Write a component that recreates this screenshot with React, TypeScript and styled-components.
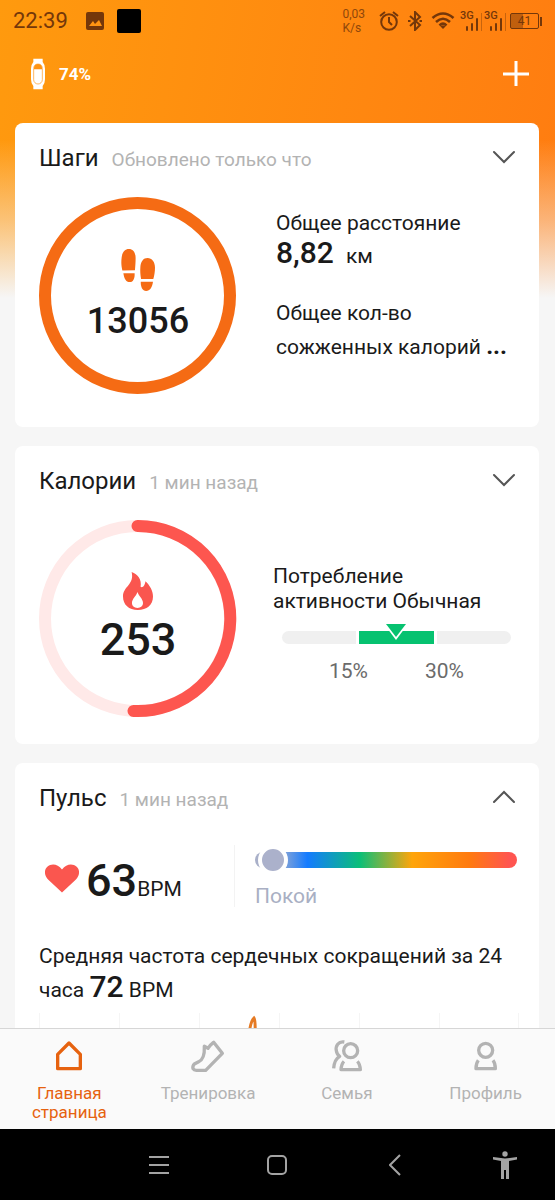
import React from "react";
import styled, { createGlobalStyle } from "styled-components";

const GlobalStyle = createGlobalStyle`
  *, *::before, *::after { box-sizing: border-box; }
  body { margin: 0; font-family: Roboto, "Liberation Sans", sans-serif; color: #1a1a1a; }
  button { font: inherit; color: inherit; background: none; border: 0; padding: 0; cursor: pointer; }
  h2, p { margin: 0; font-weight: 400; }
  svg { display: block; flex: none; }
`;

const INK = "#74370a";
const GREY = "#b3b3b3";

const Screen = styled.div`
  height: 100vh;
  display: flex;
  flex-direction: column;
  background:
    linear-gradient(to bottom, rgba(246, 246, 246, 0) 140px, rgba(246, 246, 246, 0.45) 220px, #f6f6f6 298px),
    linear-gradient(100deg, #ff9a0e 0%, #ff8710 50%, #ff7411 100%);
`;

const StatusBar = styled.div`
  flex: none;
  height: 42px;
  padding: 0 13px;
  display: flex;
  align-items: center;
  justify-content: space-between;
  color: ${INK};
`;

const StatusGroup = styled.div<{ $gap: number }>`
  display: flex;
  align-items: center;
  gap: ${(p) => p.$gap}px;
`;

const Clock = styled.time`
  font-size: 22px;
  line-height: 24px;
  margin-right: 5px;
`;

const BlackTile = styled.span`
  width: 24px;
  height: 24px;
  border-radius: 2px;
  background: #000;
`;

const NetSpeed = styled.span`
  font-size: 12px;
  line-height: 14px;
  margin-right: 7px;
  opacity: 0.8;
`;

const SignalBox = styled.span`
  display: flex;
  position: relative;
`;

const SignalLabel = styled.span`
  position: absolute;
  left: -2px;
  top: 0;
  font-size: 11px;
  line-height: 12px;
  font-weight: 500;
`;

const Battery = styled.span`
  display: flex;
  align-items: center;
  gap: 1px;
  &::after {
    content: "";
    width: 2px;
    height: 9px;
    background: ${INK};
  }
`;

const BatteryBody = styled.span`
  width: 29px;
  height: 16px;
  border: 1px solid ${INK};
  border-radius: 2px;
  background: linear-gradient(to right, rgba(116, 55, 10, 0.45) 45%, transparent 45%);
  font-size: 12px;
  line-height: 14px;
  text-align: center;
`;

const AppHeader = styled.header`
  flex: none;
  height: 81px;
  padding: 14px 24px 0 30px;
  display: flex;
  align-items: flex-start;
  justify-content: space-between;
  color: #fff;
`;

const Device = styled.button`
  height: 36px;
  display: flex;
  align-items: center;
  gap: 13px;
  font-size: 17px;
  font-weight: 700;
`;

const AddButton = styled.button`
  height: 36px;
  display: flex;
  align-items: center;
`;

const Feed = styled.main`
  flex: 1;
  min-height: 0;
  overflow: hidden;
  padding: 0 16px 0 15px;
  display: flex;
  flex-direction: column;
  gap: 19px;
`;

const Card = styled.section<{ $bottom: number }>`
  flex: none;
  padding: 0 24px ${(p) => p.$bottom}px;
  border-radius: 8px;
  background: #fff;
`;

const CardHead = styled.div`
  height: 74px;
  padding-top: 19px;
  display: flex;
  align-items: flex-start;
  justify-content: space-between;
`;

const CardHeading = styled.div`
  display: flex;
  align-items: baseline;
  gap: 13px;
  line-height: 32px;
`;

const CardTitle = styled.h2`
  font-size: 24px;
`;

const CardNote = styled.span`
  font-size: 19px;
  color: ${GREY};
`;

const Toggle = styled.button`
  height: 30px;
  display: flex;
  align-items: center;
`;

const CardBody = styled.div<{ $gap: number }>`
  display: flex;
  gap: ${(p) => p.$gap}px;
`;

const RingBox = styled.div`
  flex: none;
  width: 198px;
  height: 198px;
  display: grid;
  > * { grid-area: 1 / 1; }
`;

const RingContent = styled.div`
  display: flex;
  flex-direction: column;
  align-items: center;
  padding-top: 52px;
`;

const RingValue = styled.strong<{ $size: number }>`
  font-size: ${(p) => p.$size}px;
  line-height: 52px;
  font-weight: 500;
  margin-top: 4px;
`;

const Details = styled.div<{ $top: number }>`
  flex: 1;
  min-width: 0;
  padding-top: ${(p) => p.$top}px;
`;

const Text = styled.p<{ $line: number }>`
  font-size: 21px;
  line-height: ${(p) => p.$line}px;
`;

const Truncated = styled(Text)`
  margin-top: 21px;
  white-space: nowrap;
`;

const Strong = styled.strong`
  font-size: 30px;
  line-height: 24px;
  font-weight: 500;
`;

const Ellipsis = styled.strong`
  font-size: 24px;
  line-height: 24px;
`;

const DistanceUnit = styled.span`
  margin-left: 12px;
`;

const Scale = styled.div`
  margin: 17px 4px 0 9px;
  display: grid;
  grid-template-columns: 1fr 1fr 1fr;
  gap: 3px;
`;

const Segment = styled.span<{ $kind: "start" | "active" | "end" }>`
  height: 13px;
  display: flex;
  justify-content: center;
  background: ${(p) => (p.$kind === "active" ? "#06c270" : "#f0f0f0")};
  border-radius: ${(p) =>
    p.$kind === "start" ? "7px 0 0 7px" : p.$kind === "end" ? "0 7px 7px 0" : "0"};
  > svg { margin-top: -8px; }
`;

const ScaleLabels = styled.div`
  margin: 14px 4px 0 9px;
  display: flex;
  justify-content: center;
  gap: 57px;
  font-size: 21px;
  line-height: 26px;
  color: #6b6b6b;
`;

const PulseRow = styled.div`
  height: 70px;
  padding-top: 8px;
  display: flex;
`;

const PulseValue = styled.div`
  flex: none;
  width: 196px;
  height: 62px;
  padding-left: 6px;
  display: flex;
  align-items: flex-start;
  border-right: 1px solid #f3f3f3;
  > svg { margin: 19px 7px 0 0; }
`;

const PulseNumber = styled.div`
  margin-top: 6px;
  font-size: 21px;
  line-height: 60px;
  > strong { font-size: 45px; font-weight: 500; }
`;

const Zone = styled.div`
  flex: 1;
  min-width: 0;
  padding: 7px 0 0 20px;
`;

const ZoneBar = styled.div`
  position: relative;
  height: 16px;
  border-radius: 8px;
  margin-right: -2px;
  background: linear-gradient(to right, #a9b0c9 0 8%, #147bff 20%, #0bbf78 40%, #ffa50a 60%, #ff7a10 82%, #ff5550 97%);
`;

const ZoneKnob = styled.span`
  position: absolute;
  left: 3px;
  top: -7px;
  width: 30px;
  height: 30px;
  border-radius: 50%;
  border: 4px solid #fff;
  background: #abb1cb;
`;

const ZoneLabel = styled.span`
  display: block;
  margin-top: 14px;
  font-size: 21px;
  line-height: 28px;
  color: #a9afc3;
`;

const Average = styled(Text)`
  margin-top: 32px;
`;

const ChartBox = styled.div`
  height: 120px;
  margin: 6px -4px 0 0;
  > svg { width: 100%; }
`;

const TabBar = styled.nav`
  flex: none;
  height: 101px;
  border-top: 1px solid #d6d6d6;
  background: #fafafa;
  display: grid;
  grid-template-columns: repeat(4, 1fr);
`;

const Tab = styled.button<{ $active?: boolean }>`
  display: flex;
  flex-direction: column;
  align-items: center;
  padding-top: 9px;
  font-size: 17px;
  line-height: 19px;
  color: ${(p) => (p.$active ? "#e6620f" : GREY)};
  > svg { margin-bottom: 10px; }
`;

const SystemBar = styled.nav`
  flex: none;
  height: 71px;
  background: #000;
  color: #a3a3a3;
  display: grid;
  grid-template-columns: 99fr 119fr 118fr 118fr 101fr;
`;

const SystemButton = styled.button<{ $first?: boolean }>`
  grid-column-start: ${(p) => (p.$first ? 2 : "auto")};
  display: flex;
  align-items: center;
  justify-content: center;
`;

const Chevron = ({ up }: { up?: boolean }) => (
  <svg width="24" height="16" viewBox="0 0 24 16" fill="none" stroke="#555" strokeWidth="2" strokeLinecap="round">
    <path d={up ? "M3 13 L13 3 L23 13" : "M3 3 L13 13 L23 3"} />
  </svg>
);

const Signal = () => (
  <SignalBox>
    <svg width="23" height="22" viewBox="0 0 23 22" fill={INK}>
      <rect x="4" y="16" width="2" height="5" rx="1" />
      <rect x="9" y="13" width="2" height="8" rx="1" />
      <rect x="14" y="8" width="2" height="13" rx="1" />
      <rect x="19" y="3" width="1" height="18" opacity=".4" />
    </svg>
    <SignalLabel>3G</SignalLabel>
  </SignalBox>
);

const BandIcon = () => (
  <svg width="16" height="32" viewBox="0 0 48 96" fill="none">
    <path d="M10 2H38V12Q45 20 45 32V64Q45 76 38 84V94H10V84Q3 76 3 64V32Q3 20 10 12Z" fill="#fff" />
    <rect x="11" y="18" width="26" height="60" rx="13" stroke="#ff9412" strokeWidth="2" />
    <path d="M12 34V30Q12 18 24 18T36 30V34Z" fill="#ff9412" />
  </svg>
);

const Feet = () => (
  <svg width="34" height="42" viewBox="0 0 100 123" fill="#f56b14">
    <path d="M4 63C1 48 0 40 2 24C4 9 12 0 23 0C35 0 43 10 43 26C43 40 42 50 41 62Z" />
    <path d="M7 71H40C41 86 36 97 26 97C14 97 9 86 7 71Z" />
    <path d="M59 88C57 76 56 66 57 52C58 36 66 26 78 26C91 26 100 38 100 54C100 66 98 78 95 88Z" />
    <path d="M58 96H94C92 112 85 123 74 123C63 123 58 112 58 96Z" />
  </svg>
);

const Flame = () => (
  <svg width="30" height="38" viewBox="0 0 87 110" fill="#fa564f">
    <path
      fillRule="evenodd"
      d="M25 0C43 7 55 22 51 43C57 47 64 39 65 27C78 39 87 55 87 71C87 96 69 110 43 110C17 110 0 95 0 71C0 42 34 36 25 0ZM42 58C38 70 26 78 26 90C26 98 32 104 42 104C52 104 58 98 58 90C58 78 46 70 42 58Z"
    />
  </svg>
);

const Heart = () => (
  <svg width="34" height="29" viewBox="0 0 102 84" fill="#fa564f">
    <path d="M51 84L10 46C-3 32-3 16 7 7C19-4 38-2 51 15C64-2 83-4 95 7C105 16 105 32 92 46Z" />
  </svg>
);

const tabs = [
  {
    label: <>Главная<br />страница</>,
    icon: <path d="M50 11L84 45V88H16V45Z" />,
  },
  {
    label: "Тренировка",
    icon: <path d="M39 21L50 27L39 21C40 44 34 62 22 67L9 74Q3 80 5 88Q8 93 15 93H43L93 42L67 9L57 18L50 27" />,
  },
  {
    label: "Семья",
    icon: (
      <>
        <circle cx="61" cy="34" r="21" />
        <path d="M41 66Q33 74 32 91H90Q89 74 81 66M42 8C24 5 15 20 18 34Q20 46 28 51Q12 60 10 87" />
      </>
    ),
  },
  {
    label: "Профиль",
    icon: (
      <>
        <circle cx="49" cy="33" r="21" />
        <path d="M27 63Q20 72 20 88H78Q78 72 71 63" />
      </>
    ),
  },
];

export default function App() {
  return (
    <Screen>
      <GlobalStyle />
      <StatusBar>
        <StatusGroup $gap={13}>
          <Clock>22:39</Clock>
          <svg width="18" height="18" viewBox="0 0 18 18">
            <rect width="18" height="18" rx="2" fill={INK} />
            <path d="M3 14L7 9L9 12L13 8L16 14Z" fill="#ff9412" />
          </svg>
          <BlackTile />
        </StatusGroup>
        <StatusGroup $gap={7}>
          <NetSpeed>0,03<br />K/s</NetSpeed>
          <svg width="20" height="20" viewBox="0 0 20 20" fill="none" stroke={INK} strokeWidth="2">
            <circle cx="10" cy="11" r="7.8" />
            <path d="M10 6V11L13 14M1 5L6 1M19 5L14 1" />
          </svg>
          <svg width="18" height="20" viewBox="0 0 18 20" fill="none" stroke={INK} strokeWidth="2">
            <path d="M4 5L14 14L9 19V1L14 6L4 15" />
            <path d="M2 10H4.500M13.500 10H16" />
          </svg>
          <svg width="24" height="20" viewBox="0 0 24 20" fill="none" stroke={INK} strokeWidth="2.600">
            <path d="M1.500 7Q12-2 22.500 7M5 11Q12 4.500 19 11M8.500 14.500Q12 11 15.500 14.500" />
            <path d="M9.500 15.500Q12 13.500 14.500 15.500L12 18Z" fill={INK} stroke="none" />
          </svg>
          <StatusGroup $gap={1}>
            <Signal />
            <Signal />
            <Battery><BatteryBody>41</BatteryBody></Battery>
          </StatusGroup>
        </StatusGroup>
      </StatusBar>

      <AppHeader>
        <Device aria-label="Браслет, заряд 74%"><BandIcon />74%</Device>
        <AddButton aria-label="Добавить">
          <svg width="28" height="28" viewBox="0 0 28 28" stroke="#fff" strokeWidth="3">
            <path d="M13 1V26M0 14H26" />
          </svg>
        </AddButton>
      </AppHeader>

      <Feed>
        <Card $bottom={32}>
          <CardHead>
            <CardHeading>
              <CardTitle>Шаги</CardTitle>
              <CardNote>Обновлено только что</CardNote>
            </CardHeading>
            <Toggle aria-label="Развернуть"><Chevron /></Toggle>
          </CardHead>
          <CardBody $gap={39}>
            <RingBox>
              <svg width="198" height="198" fill="none">
                <circle cx="98.500" cy="98.500" r="92.500" stroke="#f56b14" strokeWidth="12" />
              </svg>
              <RingContent>
                <Feet />
                <RingValue $size={36}>13056</RingValue>
              </RingContent>
            </RingBox>
            <Details $top={12}>
              <Text $line={29}>Общее расстояние</Text>
              <Text $line={37}><Strong>8,82</Strong><DistanceUnit>км</DistanceUnit></Text>
              <Truncated $line={34}>
                Общее кол-во<br />сожженных калорий <Ellipsis>...</Ellipsis>
              </Truncated>
            </Details>
          </CardBody>
        </Card>

        <Card $bottom={26}>
          <CardHead>
            <CardHeading>
              <CardTitle>Калории</CardTitle>
              <CardNote>1 мин назад</CardNote>
            </CardHeading>
            <Toggle aria-label="Развернуть"><Chevron /></Toggle>
          </CardHead>
          <CardBody $gap={36}>
            <RingBox>
              <svg width="198" height="198" fill="none" strokeWidth="12" strokeLinecap="round">
                <circle cx="98.500" cy="98.500" r="92.500" stroke="#ffe9e8" />
                <path d="M98.500 6A92.500 92.500 0 1 1 94.500 190.900" stroke="#fd564f" />
              </svg>
              <RingContent>
                <Flame />
                <RingValue $size={45}>253</RingValue>
              </RingContent>
            </RingBox>
            <Details $top={44}>
              <Text $line={25}>Потребление<br />активности Обычная</Text>
              <Scale>
                <Segment $kind="start" />
                <Segment $kind="active">
                  <svg width="28" height="20" viewBox="0 0 28 20">
                    <path d="M2 1H26L14 17Z" fill="#fff" />
                    <path d="M4 1H24L14 14Z" fill="#06c270" />
                  </svg>
                </Segment>
                <Segment $kind="end" />
              </Scale>
              <ScaleLabels><span>15%</span><span>30%</span></ScaleLabels>
            </Details>
          </CardBody>
        </Card>

        <Card $bottom={24}>
          <CardHead>
            <CardHeading>
              <CardTitle>Пульс</CardTitle>
              <CardNote>1 мин назад</CardNote>
            </CardHeading>
            <Toggle aria-label="Свернуть"><Chevron up /></Toggle>
          </CardHead>
          <PulseRow>
            <PulseValue>
              <Heart />
              <PulseNumber><strong>63</strong>BPM</PulseNumber>
            </PulseValue>
            <Zone>
              <ZoneBar><ZoneKnob /></ZoneBar>
              <ZoneLabel>Покой</ZoneLabel>
            </Zone>
          </PulseRow>
          <Average $line={34}>
            Средняя частота сердечных сокращений за 24 часа <Strong>72</Strong> BPM
          </Average>
          <ChartBox>
            <svg height="120" viewBox="0 0 480 120" preserveAspectRatio="xMinYMin slice" fill="none">
              <path d="M.5 0V120M80.500 0V120M160.500 0V120M240.500 0V120M320.500 0V120M400.500 0V120M479.500 0V120" stroke="#f5f5f5" />
              <path d="M210 30C210 18 212 8 215 5C217 8 216 16 216 30" stroke="#e57a24" strokeWidth="3" />
            </svg>
          </ChartBox>
        </Card>
      </Feed>

      <TabBar>
        {tabs.map((tab, i) => (
          <Tab key={i} $active={i === 0}>
            <svg
              width="36"
              height="36"
              viewBox="-4 -4 108 108"
              fill="none"
              stroke="currentColor"
              strokeWidth="10"
              strokeLinejoin="round"
            >
              {tab.icon}
            </svg>
            <span>{tab.label}</span>
          </Tab>
        ))}
      </TabBar>

      <SystemBar>
        <SystemButton $first aria-label="Недавние">
          <svg width="20" height="20" viewBox="0 0 20 20" stroke="currentColor" strokeWidth="2">
            <path d="M0 2H20M0 10H20M0 18H20" />
          </svg>
        </SystemButton>
        <SystemButton aria-label="Домой">
          <svg width="22" height="22" viewBox="0 0 22 22" fill="none" stroke="currentColor" strokeWidth="2">
            <rect x="2" y="2" width="18" height="18" rx="4" />
          </svg>
        </SystemButton>
        <SystemButton aria-label="Назад">
          <svg width="12" height="22" viewBox="0 0 12 22" fill="none" stroke="currentColor" strokeWidth="2">
            <path d="M11 1L1 11L11 21" />
          </svg>
        </SystemButton>
        <SystemButton aria-label="Специальные возможности">
          <svg width="24" height="28" viewBox="0 0 24 28" fill="currentColor">
            <circle cx="12" cy="3" r="2.700" />
            <path d="M0 6L12 7.500L24 6V8.500L16 10V28H13V19H11V28H8V10L0 8.500Z" />
          </svg>
        </SystemButton>
      </SystemBar>
    </Screen>
  );
}
